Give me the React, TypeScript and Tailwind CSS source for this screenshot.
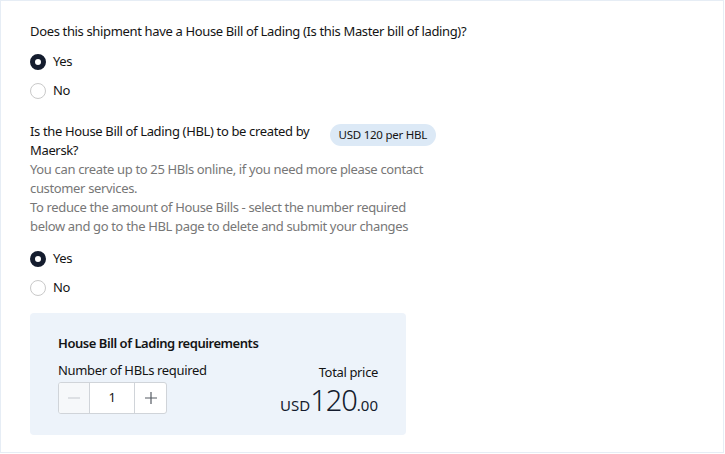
import { useState } from 'react';

function Radio({ checked, label, onClick }: { checked: boolean; label: string; onClick: () => void }) {
  return (
    <button type="button" onClick={onClick} className="flex items-center gap-[7px] h-[20px]">
      {checked ? (
        <span className="w-[16px] h-[16px] rounded-full border-[5px] border-[#141c2e] bg-white" />
      ) : (
        <span className="w-[16px] h-[16px] rounded-full border border-[#c9c9c9] bg-white" />
      )}
      <span className="text-[13px] text-[#141414]">{label}</span>
    </button>
  );
}

export default function App() {
  const [hasHouse, setHasHouse] = useState(true);
  const [byMaersk, setByMaersk] = useState(true);
  const [count, setCount] = useState(1);

  return (
    <div
      className="w-[724px] h-[453px] border border-[#e6edf5] bg-white text-[#141414] tracking-[-0.35px]"
      style={{ fontFamily: '"Noto Sans", "Liberation Sans", sans-serif' }}
    >
      <div className="pl-[29px] pt-[20px]">
        {/* Question 1 */}
        <p className="text-[13px] leading-[20px]">
          Does this shipment have a House Bill of Lading (Is this Master bill of lading)?
        </p>
        <div className="mt-[11px] flex flex-col gap-[9px]">
          <Radio checked={hasHouse} label="Yes" onClick={() => setHasHouse(true)} />
          <Radio checked={!hasHouse} label="No" onClick={() => setHasHouse(false)} />
        </div>

        {/* Question 2 */}
        <div className="mt-[21px] w-[406px] flex items-start justify-between">
          <p className="text-[13px] leading-[19px] w-[290px]">
            Is the House Bill of Lading (HBL) to be created by Maersk?
          </p>
          <span className="mt-[2px] h-[22px] px-[9px] flex items-center rounded-full bg-[#dce9f6] text-[11.5px] text-[#141414] tracking-[-0.25px]">
            USD 120 per HBL
          </span>
        </div>
        <p className="text-[13px] leading-[19px] text-[#777777] w-[400px]">
          You can create up to 25 HBls online, if you need more please contact customer services.
          <br />
          To reduce the amount of House Bills - select the number required below and go to the HBL page to delete and submit your changes
        </p>
        <div className="mt-[13px] flex flex-col gap-[9px]">
          <Radio checked={byMaersk} label="Yes" onClick={() => setByMaersk(true)} />
          <Radio checked={!byMaersk} label="No" onClick={() => setByMaersk(false)} />
        </div>

        {/* Requirements box */}
        <div className="mt-[15px] w-[376px] h-[122px] rounded-[4px] bg-[#edf3fa] px-[28px] pt-[20px]">
          <p className="text-[13px] leading-[20px] font-semibold tracking-[-0.45px]">House Bill of Lading requirements</p>
          <div className="mt-[8px] flex justify-between">
            <div>
              <p className="text-[13px] leading-[18px]">Number of HBLs required</p>
              <div className="mt-[3px] flex h-[32px] w-[109px] rounded-[3px] border border-[#d0d4d9] bg-white overflow-hidden">
                <button
                  type="button"
                  onClick={() => setCount(Math.max(1, count - 1))}
                  className="w-[31px] flex items-center justify-center bg-[#f6f8fa] border-r border-[#d0d4d9]"
                >
                  <svg width="12" height="12" viewBox="0 0 12 12">
                    <path d="M0 6h12" stroke="#c4c8cd" strokeWidth="1.2" />
                  </svg>
                </button>
                <div className="flex-1 flex items-center justify-center text-[13px] border-r border-[#d0d4d9]">
                  {count}
                </div>
                <button
                  type="button"
                  onClick={() => setCount(Math.min(25, count + 1))}
                  className="w-[31px] flex items-center justify-center"
                >
                  <svg width="12" height="12" viewBox="0 0 12 12">
                    <path d="M0 6h12M6 0v12" stroke="#555b63" strokeWidth="1.2" />
                  </svg>
                </button>
              </div>
            </div>
            <div className="flex flex-col items-end pt-[2px]">
              <p className="text-[13px] leading-[18px]">Total price</p>
              <p className="mt-[8px] flex items-baseline leading-[22px] text-[#141c2e] tracking-normal">
                <span className="text-[15px]">USD</span>
                <span className="text-[29px] font-light tracking-[-1px]">{count * 120}</span>
                <span className="text-[15px]">.00</span>
              </p>
            </div>
          </div>
        </div>
      </div>
    </div>
  );
}
